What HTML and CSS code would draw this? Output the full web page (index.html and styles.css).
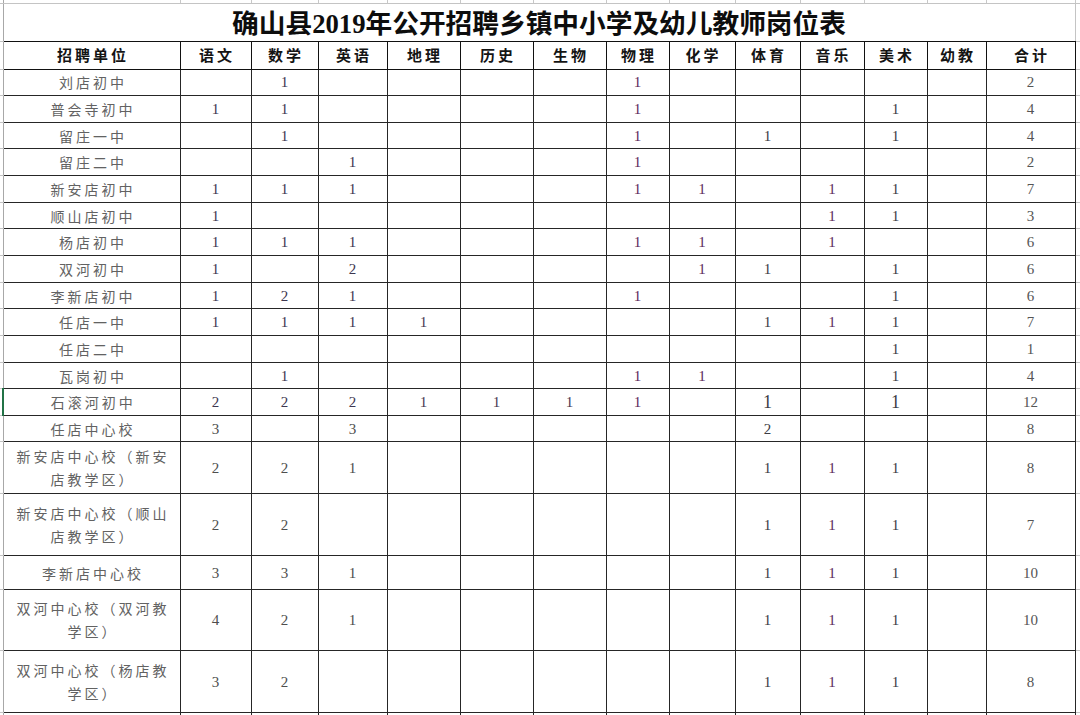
FILE: index.html
```html
<!DOCTYPE html>
<html lang="zh-CN">
<head>
<meta charset="utf-8">
<title>确山县2019年公开招聘乡镇中小学及幼儿教师岗位表</title>
<link rel="stylesheet" href="styles.css">
</head>
<body>
<table class="sheet">
  <colgroup>
    <col class="c-g1"><col class="c-name"><col class="c-yw"><col class="c-sx"><col class="c-yy"><col class="c-dl"><col class="c-ls"><col class="c-sw"><col class="c-wl"><col class="c-hx"><col class="c-ty"><col class="c-yl"><col class="c-ms"><col class="c-yj"><col class="c-hj"><col class="c-g2">
  </colgroup>
  <tbody>
    <tr class="r-strip"><td class="g"></td><td></td><td></td><td></td><td></td><td></td><td></td><td></td><td></td><td></td><td></td><td></td><td></td><td></td><td></td><td class="g"></td></tr>
    <tr class="r-title"><td class="g"></td><td class="title" colspan="14">确山县2019年公开招聘乡镇中小学及幼儿教师岗位表</td><td class="g"></td></tr>
    <tr class="r-head"><td class="g"></td><th>招聘单位</th><th>语文</th><th>数学</th><th>英语</th><th>地理</th><th>历史</th><th>生物</th><th>物理</th><th>化学</th><th>体育</th><th>音乐</th><th>美术</th><th>幼教</th><th>合计</th><td class="g"></td></tr>
    <tr class="r1"><td class="g"></td><td class="name">刘店初中</td><td></td><td>1</td><td></td><td></td><td></td><td></td><td>1</td><td></td><td></td><td></td><td></td><td></td><td>2</td><td class="g"></td></tr>
    <tr class="r1"><td class="g"></td><td class="name">普会寺初中</td><td>1</td><td>1</td><td></td><td></td><td></td><td></td><td>1</td><td></td><td></td><td></td><td>1</td><td></td><td>4</td><td class="g"></td></tr>
    <tr class="r1"><td class="g"></td><td class="name">留庄一中</td><td></td><td>1</td><td></td><td></td><td></td><td></td><td>1</td><td></td><td>1</td><td></td><td>1</td><td></td><td>4</td><td class="g"></td></tr>
    <tr class="r1"><td class="g"></td><td class="name">留庄二中</td><td></td><td></td><td>1</td><td></td><td></td><td></td><td>1</td><td></td><td></td><td></td><td></td><td></td><td>2</td><td class="g"></td></tr>
    <tr class="r1"><td class="g"></td><td class="name">新安店初中</td><td>1</td><td>1</td><td>1</td><td></td><td></td><td></td><td>1</td><td>1</td><td></td><td>1</td><td>1</td><td></td><td>7</td><td class="g"></td></tr>
    <tr class="r1"><td class="g"></td><td class="name">顺山店初中</td><td>1</td><td></td><td></td><td></td><td></td><td></td><td></td><td></td><td></td><td>1</td><td>1</td><td></td><td>3</td><td class="g"></td></tr>
    <tr class="r1"><td class="g"></td><td class="name">杨店初中</td><td>1</td><td>1</td><td>1</td><td></td><td></td><td></td><td>1</td><td>1</td><td></td><td>1</td><td></td><td></td><td>6</td><td class="g"></td></tr>
    <tr class="r1"><td class="g"></td><td class="name">双河初中</td><td>1</td><td></td><td>2</td><td></td><td></td><td></td><td></td><td>1</td><td>1</td><td></td><td>1</td><td></td><td>6</td><td class="g"></td></tr>
    <tr class="r1"><td class="g"></td><td class="name">李新店初中</td><td>1</td><td>2</td><td>1</td><td></td><td></td><td></td><td>1</td><td></td><td></td><td></td><td>1</td><td></td><td>6</td><td class="g"></td></tr>
    <tr class="r1"><td class="g"></td><td class="name">任店一中</td><td>1</td><td>1</td><td>1</td><td>1</td><td></td><td></td><td></td><td></td><td>1</td><td>1</td><td>1</td><td></td><td>7</td><td class="g"></td></tr>
    <tr class="r1"><td class="g"></td><td class="name">任店二中</td><td></td><td></td><td></td><td></td><td></td><td></td><td></td><td></td><td></td><td></td><td>1</td><td></td><td>1</td><td class="g"></td></tr>
    <tr class="r1"><td class="g"></td><td class="name">瓦岗初中</td><td></td><td>1</td><td></td><td></td><td></td><td></td><td>1</td><td>1</td><td></td><td></td><td>1</td><td></td><td>4</td><td class="g"></td></tr>
    <tr class="r1"><td class="g sel"></td><td class="name">石滚河初中</td><td>2</td><td>2</td><td>2</td><td>1</td><td>1</td><td>1</td><td>1</td><td></td><td class="big">1</td><td></td><td class="big">1</td><td></td><td>12</td><td class="g"></td></tr>
    <tr class="r-a"><td class="g"></td><td class="name">任店中心校</td><td>3</td><td></td><td>3</td><td></td><td></td><td></td><td></td><td></td><td>2</td><td></td><td></td><td></td><td>8</td><td class="g"></td></tr>
    <tr class="r-b"><td class="g"></td><td class="name wrap">新安店中心校（新安店教学区）</td><td>2</td><td>2</td><td>1</td><td></td><td></td><td></td><td></td><td></td><td>1</td><td>1</td><td>1</td><td></td><td>8</td><td class="g"></td></tr>
    <tr class="r-c"><td class="g"></td><td class="name wrap">新安店中心校（顺山店教学区）</td><td>2</td><td>2</td><td></td><td></td><td></td><td></td><td></td><td></td><td>1</td><td>1</td><td>1</td><td></td><td>7</td><td class="g"></td></tr>
    <tr class="r-d"><td class="g"></td><td class="name">李新店中心校</td><td>3</td><td>3</td><td>1</td><td></td><td></td><td></td><td></td><td></td><td>1</td><td>1</td><td>1</td><td></td><td>10</td><td class="g"></td></tr>
    <tr class="r-e"><td class="g"></td><td class="name wrap">双河中心校（双河教学区）</td><td>4</td><td>2</td><td>1</td><td></td><td></td><td></td><td></td><td></td><td>1</td><td>1</td><td>1</td><td></td><td>10</td><td class="g"></td></tr>
    <tr class="r-c"><td class="g"></td><td class="name wrap">双河中心校（杨店教学区）</td><td>3</td><td>2</td><td></td><td></td><td></td><td></td><td></td><td></td><td>1</td><td>1</td><td>1</td><td></td><td>8</td><td class="g"></td></tr>
    <tr class="r-tail"><td class="g"></td><td></td><td></td><td></td><td></td><td></td><td></td><td></td><td></td><td></td><td></td><td></td><td></td><td></td><td></td><td class="g"></td></tr>
  </tbody>
</table>
</body>
</html>
```

FILE: styles.css
```css
* { box-sizing: border-box; }
html, body {
  margin: 0;
  padding: 0;
  background: #ffffff;
}
body {
  width: 1080px;
  height: 715px;
  overflow: hidden;
}

.sheet {
  border-collapse: collapse;
  table-layout: fixed;
  width: 1080px;
  font-family: "Liberation Serif", "Noto Sans CJK SC", serif;
  font-size: 15px;
}

.c-g1 { width: 3px; }
.c-name { width: 177px; }
.c-yw { width: 71px; }
.c-sx { width: 67px; }
.c-yy { width: 69px; }
.c-dl { width: 73px; }
.c-ls { width: 73px; }
.c-sw { width: 73px; }
.c-wl { width: 63px; }
.c-hx { width: 66px; }
.c-ty { width: 65px; }
.c-yl { width: 64px; }
.c-ms { width: 63px; }
.c-yj { width: 59px; }
.c-hj { width: 89px; }
.c-g2 { width: 5px; }

.sheet td,
.sheet th {
  border: 1px solid #262626;
  padding: 0;
  text-align: center;
  vertical-align: middle;
  white-space: nowrap;
  overflow: hidden;
  line-height: 18px;
}

/* spreadsheet gutter cells */
.sheet td.g {
  border-top: 1px solid #c4c4c4;
  border-bottom: 1px solid #c4c4c4;
  border-left: none;
  border-right: 1px solid #a8a8a8;
}
.sheet td.g.sel {
  border-right: 2px solid #217346;
}

/* top strip (bottom of previous spreadsheet row) */
.r-strip td {
  height: 3px;
  border-top: none;
  border-bottom: 1px solid #c4c4c4;
  border-left: 1px solid #c8c8c8;
  border-right: 1px solid #c8c8c8;
}
.sheet .r-strip td.g { border-bottom: 1px solid #c4c4c4; border-top: none; }

/* title */
.r-title td { height: 38px; }
.sheet td.title {
  border-top: 1px solid #c4c4c4;
  border-left: 1px solid #a8a8a8;
  border-right: 1px solid #c4c4c4;
  border-bottom: 1px solid #111111;
  font-family: "Liberation Serif", "Noto Sans CJK SC", serif;
  font-weight: 700;
  font-size: 26.7px;
  line-height: 30px;
  color: #0d0d0d;
  padding-top: 4px;
}

/* header */
.r-head td,
.r-head th { height: 28px; }
.sheet th {
  font-family: "Noto Sans CJK SC", sans-serif;
  font-weight: 700;
  font-size: 15px;
  letter-spacing: 3px;
  padding-left: 3px;
  color: #141414;
  border-color: #111111;
}

/* body rows */
.r1 td { height: 26.67px; }
.r-a td { height: 26px; }
.r-b td { height: 52px; }
.r-c td { height: 62px; }
.r-d td { height: 34px; }
.r-e td { height: 61px; }
.r-tail td { height: 12px; }

.sheet td.name {
  font-family: "Noto Sans CJK SC", sans-serif;
  font-size: 14px;
  letter-spacing: 3px;
  color: #626262;
  padding: 0 8px 0 11px;
}
.sheet td.name.wrap {
  white-space: normal;
  line-height: 23px;
}

/* number colours per subject column */
.sheet tr td:nth-child(3),
.sheet tr td:nth-child(4),
.sheet tr td:nth-child(5) { color: #3d3650; }
.sheet tr td:nth-child(6),
.sheet tr td:nth-child(7),
.sheet tr td:nth-child(8) { color: #4a3a52; }
.sheet tr td:nth-child(9),
.sheet tr td:nth-child(10),
.sheet tr td:nth-child(12) { color: #5e2a5c; }
.sheet tr td:nth-child(11),
.sheet tr td:nth-child(13) { color: #3c3c44; }
.sheet tr td:nth-child(15) { color: #555555; }
.sheet tr.r-a td:nth-child(3), .sheet tr.r-a td:nth-child(5),
.sheet tr.r-b td:nth-child(3), .sheet tr.r-b td:nth-child(4), .sheet tr.r-b td:nth-child(5),
.sheet tr.r-c td:nth-child(3), .sheet tr.r-c td:nth-child(4),
.sheet tr.r-d td:nth-child(3), .sheet tr.r-d td:nth-child(4), .sheet tr.r-d td:nth-child(5),
.sheet tr.r-e td:nth-child(3), .sheet tr.r-e td:nth-child(4), .sheet tr.r-e td:nth-child(5) { color: #4e4e4e; }

.sheet td.big {
  font-size: 18px;
  color: #141414;
}
```
